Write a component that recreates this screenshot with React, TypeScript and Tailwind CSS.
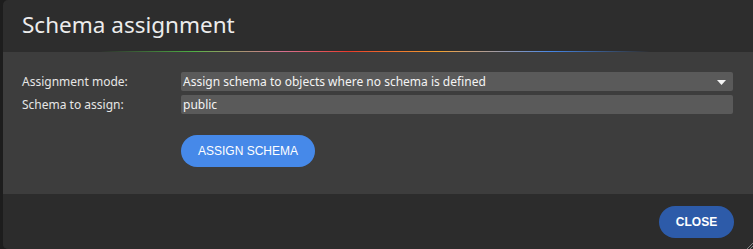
const fields = [
  { label: "Assignment mode:", value: "Assign schema to objects where no schema is defined", select: true },
  { label: "Schema to assign:", value: "public", select: false },
];

const App = () => {
  return (
    <div className="h-[249px] w-[753px] overflow-hidden bg-[#1d1d1d] pl-[3px] font-['Noto_Sans',sans-serif]">
      <div className="relative flex h-full flex-col overflow-hidden rounded-l-[5px] bg-[#2d2d2d]">
        {/* header */}
        <div className="flex h-[51px] shrink-0 items-center px-[19px]">
          <h2 className="text-[22.5px] leading-none text-[#ececec]">Schema assignment</h2>
        </div>
        {/* rainbow rule */}
        <div className="flex h-px shrink-0 pl-[97px]">
          <div className="w-[94px] bg-linear-to-r from-transparent to-[#4fb044]" />
          <div className="w-[88px] bg-linear-to-r from-[#4fb044] to-[#d5708f]" />
          <div className="w-[66px] bg-linear-to-r from-[#d5708f] to-[#e8392a]" />
          <div className="w-[93px] bg-linear-to-r from-[#e8392a] to-[#f0a030]" />
          <div className="w-[110px] bg-linear-to-r from-[#f0a030] to-[#4686e6]" />
          <div className="w-[99px] bg-linear-to-r from-[#4686e6] to-transparent" />
        </div>

        {/* body */}
        <div className="flex flex-col bg-[#3d3d3d] pb-[27px] pl-[19px] pr-[20px] pt-[20px]">
          <div className="flex flex-col gap-[4px]">
            {fields.map(f => (
              <div key={f.label} className="flex items-center">
                <div className="w-[159px] shrink-0 text-[12px] text-[#e6e6e6]">{f.label}</div>
                <div className="flex h-[19px] flex-1 items-center justify-between rounded-[2px] bg-[#5a5a5a] pl-[2px] pr-[7px] text-[12px] text-[#f4f4f4]">
                  <span>{f.value}</span>
                  {f.select && (
                    <svg width="9" height="5" viewBox="0 0 9 5" className="mt-px">
                      <path d="M0 0h9L4.5 5z" fill="#f4f4f4" />
                    </svg>
                  )}
                </div>
              </div>
            ))}
          </div>
          <div className="mt-[21px] pl-[159px]">
            <button className="h-[32px] w-[134px] rounded-full bg-[#4689e9] font-['Liberation_Sans',sans-serif] text-[12px] font-medium text-white">
              ASSIGN SCHEMA
            </button>
          </div>
        </div>

        {/* footer */}
        <div className="flex flex-1 items-start justify-end bg-[#2c2c2c] pr-[19px] pt-[12px]">
          <button className="h-[32px] w-[75px] rounded-full bg-[#2d5ba9] font-['Liberation_Sans',sans-serif] text-[12px] font-bold text-white">
            CLOSE
          </button>
        </div>

        <svg width="6" height="6" viewBox="0 0 6 6" className="absolute bottom-0 right-0">
          <path d="M0 6L6 0M3 6L6 3" stroke="#9a9a9a" strokeWidth="0.8" />
        </svg>
      </div>
    </div>
  );
};

export default App;
